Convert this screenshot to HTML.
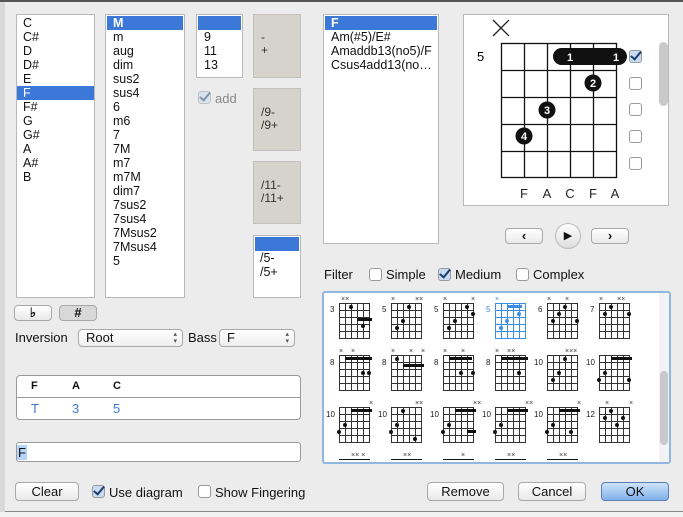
<!DOCTYPE html>
<html><head><style>
*{margin:0;padding:0;box-sizing:border-box}
body{width:683px;height:517px;background:#ececec;font-family:"Liberation Sans",sans-serif;font-size:12px;color:#111;position:relative;overflow:hidden}
.a{position:absolute}
.list{position:absolute;background:#fff;border:1px solid #b9b9b9;line-height:14px;font-size:12.5px}
.list div{padding-left:6px;height:14px}
.sel{background:#3b78d8;color:#fff}
.gb{position:absolute;background:#d6d2cc;border:1px solid #c3c0bb;color:#333;font-size:12px;line-height:13px;padding-left:7px}
.btn{position:absolute;background:linear-gradient(#fff,#e9e9e9);border:1px solid #a9a9a9;border-radius:4px;text-align:center;font-size:13px;line-height:17px;height:19px}
.cb{position:absolute;width:13px;height:13px;border:1px solid #9a9a9a;border-radius:3px;background:#fff}
.cb.on::after{content:"";position:absolute;left:3px;top:-2px;width:4px;height:9px;border:solid #1d3d6a;border-width:0 2.5px 2.5px 0;transform:rotate(40deg)}
.cb.on{background:#c7dcf3}
.sel2{position:absolute;background:linear-gradient(#fff,#eee);border:1px solid #a9a9a9;border-radius:4px;height:18px;font-size:13px;line-height:16px;padding-left:7px}
.sel2::after{content:"▴\A▾";white-space:pre;position:absolute;right:5px;top:1px;font-size:7px;line-height:7px;color:#555}
</style></head><body>
<div class="a" style="left:0;top:0;width:683px;height:2px;background:#555"></div>
<div class="a" style="left:0;top:511px;width:683px;height:1px;background:#888"></div>
<div class="a" style="left:0;top:512px;width:683px;height:5px;background:#f2f2f2"></div>
<div class="a" style="left:0;top:2px;width:5px;height:510px;background:#d8d8d8"></div>

<div class="list" style="left:16px;top:14px;width:79px;height:284px;padding-top:1px">
<div>C</div><div>C#</div><div>D</div><div>D#</div><div>E</div><div class="sel">F</div><div>F#</div><div>G</div><div>G#</div><div>A</div><div>A#</div><div>B</div></div>
<div class="list" style="left:105px;top:14px;width:80px;height:284px;padding:1px 1px 0">
<div class="sel" style="font-weight:bold">M</div><div>m</div><div>aug</div><div>dim</div><div>sus2</div><div>sus4</div><div>6</div><div>m6</div><div>7</div><div>7M</div><div>m7</div><div>m7M</div><div>dim7</div><div>7sus2</div><div>7sus4</div><div>7Msus2</div><div>7Msus4</div><div>5</div></div>
<div class="list" style="left:196px;top:14px;width:47px;height:64px;padding:1px 1px 0">
<div class="sel"></div><div>9</div><div>11</div><div>13</div></div>
<div class="cb on" style="left:198px;top:91px;opacity:.5"></div>
<div class="a" style="left:215px;top:91px;font-size:13px;color:#888">add</div>
<div class="gb" style="left:253px;top:14px;width:48px;height:64px;padding-top:16px">-<br>+</div>
<div class="gb" style="left:253px;top:88px;width:48px;height:63px;padding-top:17px">/9-<br>/9+</div>
<div class="gb" style="left:253px;top:161px;width:48px;height:63px;padding-top:17px">/11-<br>/11+</div>
<div class="list" style="left:253px;top:235px;width:48px;height:63px;padding:1px 1px 0">
<div class="sel"></div><div style="padding-left:5px">/5-</div><div style="padding-left:5px">/5+</div></div>
<div class="list" style="left:323px;top:14px;width:116px;height:230px;padding:1px 1px 0">
<div class="sel" style="font-weight:bold">F</div><div>Am(#5)/E#</div><div>Amaddb13(no5)/F</div><div>Csus4add13(no…</div></div>

<div class="a" style="left:463px;top:14px;width:206px;height:192px;background:#fff;border:1px solid #b9b9b9"></div>
<div class="a" style="left:659px;top:42px;width:9px;height:64px;background:#c9c9c9;border-radius:5px"></div>
<svg class="a" style="left:463px;top:14px" width="195" height="192">
<path d="M30 6 L46 22 M46 6 L30 22" stroke="#222" stroke-width="1.3"/>
<text x="14" y="47" font-family="Liberation Sans" font-size="13">5</text>
<g stroke="#111" stroke-width="1.3" fill="none">
<rect x="38.5" y="29.5" width="115" height="134"/>
<path d="M61.5 29.5V163.5M84.5 29.5V163.5M107.5 29.5V163.5M130.5 29.5V163.5M38.5 56.5H153.5M38.5 83.5H153.5M38.5 110.5H153.5M38.5 137.5H153.5"/>
</g>
<rect x="90" y="34" width="74" height="17" rx="8.5" fill="#111"/>
<circle cx="130" cy="69" r="8.5" fill="#111"/><circle cx="84" cy="96" r="8.5" fill="#111"/><circle cx="61" cy="122" r="8.5" fill="#111"/>
<g fill="#fff" font-family="Liberation Sans" font-weight="bold" font-size="11" text-anchor="middle">
<text x="107" y="47">1</text><text x="153" y="47">1</text><text x="130" y="73">2</text><text x="84" y="100">3</text><text x="61" y="126">4</text></g>
<g font-family="Liberation Sans" font-size="13" text-anchor="middle" fill="#222">
<text x="61" y="184">F</text><text x="84" y="184">A</text><text x="107" y="184">C</text><text x="130" y="184">F</text><text x="152" y="184">A</text></g>
</svg>
<div class="cb on" style="left:629px;top:50px"></div>
<div class="cb" style="left:629px;top:77px"></div>
<div class="cb" style="left:629px;top:103px"></div>
<div class="cb" style="left:629px;top:130px"></div>
<div class="cb" style="left:629px;top:157px"></div>

<div class="btn" style="left:505px;top:228px;width:38px;height:16px;line-height:14px;font-weight:bold">‹</div>
<div class="a" style="left:555px;top:223px;width:26px;height:26px;border-radius:50%;background:linear-gradient(#fff,#ddd);border:1px solid #bbb;text-align:center;line-height:24px;font-size:11px">▶</div>
<div class="btn" style="left:591px;top:228px;width:38px;height:16px;line-height:14px;font-weight:bold">›</div>

<div class="a" style="left:324px;top:267px;font-size:13px">Filter</div>
<div class="cb" style="left:369px;top:268px"></div><div class="a" style="left:386px;top:267px;font-size:13px">Simple</div>
<div class="cb on" style="left:438px;top:268px"></div><div class="a" style="left:455px;top:267px;font-size:13px">Medium</div>
<div class="cb" style="left:516px;top:268px"></div><div class="a" style="left:533px;top:267px;font-size:13px">Complex</div>

<div class="a" style="left:322px;top:291px;width:349px;height:173px;background:#fff;border:2px solid #8fb7df;border-radius:3px;overflow:hidden">
<svg width="345" height="169" style="position:absolute;left:0;top:0">
<defs><g id="g" fill="none" stroke="#333" stroke-width="1"><rect x=".5" y=".5" width="30" height="35"/><path d="M6.5 .5V35.5M12.5 .5V35.5M18.5 .5V35.5M24.5 .5V35.5M.5 7.5H30.5M.5 14.5H30.5M.5 21.5H30.5M.5 28.5H30.5"/></g></defs>
<g font-family="Liberation Sans" font-size="8" fill="#222">
<use href="#g" x="15" y="10"/><use href="#g" x="67" y="10"/><use href="#g" x="119" y="10"/><use href="#g" x="223" y="10"/><use href="#g" x="275" y="10"/>
<g transform="translate(171,10)" fill="none" stroke="#3a8ee6"><rect x=".5" y=".5" width="30" height="35"/><path d="M6.5 .5V35.5M12.5 .5V35.5M18.5 .5V35.5M24.5 .5V35.5M.5 7.5H30.5M.5 14.5H30.5M.5 21.5H30.5M.5 28.5H30.5"/></g>
<use href="#g" x="15" y="62"/><use href="#g" x="67" y="62"/><use href="#g" x="119" y="62"/><use href="#g" x="171" y="62"/><use href="#g" x="223" y="62"/><use href="#g" x="275" y="62"/>
<use href="#g" x="15" y="114"/><use href="#g" x="67" y="114"/><use href="#g" x="119" y="114"/><use href="#g" x="171" y="114"/><use href="#g" x="223" y="114"/><use href="#g" x="275" y="114"/>
<text x="6" y="19">3</text><text x="58" y="19">5</text><text x="110" y="19">5</text><text x="162" y="19" fill="#3a8ee6">5</text><text x="214" y="19">6</text><text x="266" y="19">7</text>
<text x="6" y="72">8</text><text x="58" y="72">8</text><text x="110" y="72">8</text><text x="162" y="72">8</text><text x="210" y="72">10</text><text x="262" y="72">10</text>
<text x="2" y="124">10</text><text x="54" y="124">10</text><text x="106" y="124">10</text><text x="158" y="124">10</text><text x="210" y="124">10</text><text x="262" y="124">12</text>
</g>
<g fill="#111">
<circle cx="27" cy="14" r="2"/><rect x="33" y="25" width="15" height="3"/><circle cx="39" cy="33" r="2"/>
<circle cx="85" cy="14" r="2"/><circle cx="79" cy="28" r="2"/><circle cx="73" cy="35" r="2"/>
<circle cx="143" cy="14" r="2"/><circle cx="149" cy="21" r="2"/><circle cx="131" cy="28" r="2"/><circle cx="125" cy="35" r="2"/>
<circle cx="241" cy="14" r="2"/><circle cx="235" cy="21" r="2"/><circle cx="229" cy="28" r="2"/><circle cx="253" cy="28" r="2"/>
<circle cx="287" cy="14" r="2"/><circle cx="281" cy="21" r="2"/><circle cx="305" cy="21" r="2"/>
<rect x="21" y="64" width="27" height="3"/><circle cx="39" cy="80" r="2"/><circle cx="45" cy="80" r="2"/>
<circle cx="73" cy="66" r="2"/><rect x="79" y="71" width="21" height="3"/>
<rect x="125" y="64" width="23" height="3"/><circle cx="137" cy="80" r="2"/><circle cx="149" cy="80" r="2"/>
<rect x="177" y="64" width="27" height="3"/><circle cx="195" cy="80" r="2"/>
<circle cx="241" cy="66" r="2"/><circle cx="235" cy="80" r="2"/><circle cx="229" cy="87" r="2"/>
<rect x="287" y="64" width="21" height="3"/><circle cx="281" cy="80" r="2"/><circle cx="275" cy="87" r="2"/><circle cx="305" cy="87" r="2"/>
<rect x="27" y="116" width="21" height="3"/><circle cx="21" cy="132" r="2"/><circle cx="15" cy="139" r="2"/>
<circle cx="79" cy="118" r="2"/><circle cx="73" cy="132" r="2"/><circle cx="67" cy="139" r="2"/><circle cx="91" cy="146" r="2"/>
<rect x="131" y="116" width="21" height="3"/><circle cx="125" cy="132" r="2"/><circle cx="119" cy="139" r="2"/><rect x="143" y="137" width="9" height="3"/>
<rect x="183" y="116" width="21" height="3"/><circle cx="177" cy="132" r="2"/><circle cx="171" cy="139" r="2"/>
<rect x="235" y="116" width="21" height="3"/><circle cx="229" cy="132" r="2"/><circle cx="223" cy="139" r="2"/><circle cx="247" cy="139" r="2"/>
<circle cx="287" cy="118" r="2"/><circle cx="281" cy="125" r="2"/><circle cx="299" cy="125" r="2"/><circle cx="293" cy="132" r="2"/>
<rect x="15" y="166" width="31" height="1"/><rect x="67" y="166" width="31" height="1"/><rect x="119" y="166" width="31" height="1"/><rect x="171" y="166" width="31" height="1"/><rect x="223" y="166" width="31" height="1"/>
</g>
<g fill="#3a8ee6"><rect x="183" y="12" width="15" height="3"/><circle cx="195" cy="21" r="2"/><circle cx="183" cy="28" r="2"/><circle cx="177" cy="35" r="2"/></g>
<g font-family="Liberation Sans" font-size="7" fill="#333">
<text x="17" y="8">××</text><text x="67" y="8">×</text><text x="91" y="8">××</text><text x="119" y="8">×</text><text x="147" y="8">×</text><text x="171" y="8" fill="#3a8ee6">×</text><text x="223" y="8">×</text><text x="241" y="8">×</text><text x="275" y="8">×</text><text x="293" y="8">××</text>
<text x="15" y="60">×</text><text x="27" y="60">×</text><text x="67" y="60">×</text><text x="85" y="60">×</text><text x="97" y="60">×</text><text x="119" y="60">×</text><text x="137" y="60">×</text><text x="171" y="60">×</text><text x="183" y="60">××</text><text x="241" y="60">×××</text>
<text x="45" y="112">×</text><text x="91" y="112">××</text><text x="149" y="112">××</text><text x="201" y="112">××</text><text x="253" y="112">×</text><text x="281" y="112">×</text><text x="305" y="112">×</text>
<text x="27" y="164">×× ×</text><text x="79" y="164">××</text><text x="137" y="164">×</text><text x="183" y="164">××</text><text x="235" y="164">××</text>
</g>
</svg>
<div class="a" style="left:335px;top:0;width:10px;height:169px;background:#f2f2f2"></div>
<div class="a" style="left:336px;top:78px;width:8px;height:74px;background:#c9c9c9;border-radius:4px"></div>
</div>

<div class="btn" style="left:14px;top:305px;width:38px;height:16px;line-height:14px;font-weight:bold">♭</div>
<div class="btn" style="left:59px;top:305px;width:38px;height:16px;line-height:14px;background:#d8d8d8;font-weight:bold">#</div>
<div class="a" style="left:15px;top:330px;font-size:13px">Inversion</div>
<div class="sel2" style="left:78px;top:329px;width:105px">Root</div>
<div class="a" style="left:188px;top:330px;font-size:13px">Bass</div>
<div class="sel2" style="left:219px;top:329px;width:76px">F</div>

<div class="a" style="left:16px;top:375px;width:285px;height:45px;background:#fff;border:1px solid #999;border-radius:4px"></div>
<div class="a" style="left:16px;top:397px;width:285px;height:1px;background:#999"></div>
<div class="a" style="left:31px;top:380px;font-weight:bold;font-size:11px">F</div>
<div class="a" style="left:72px;top:380px;font-weight:bold;font-size:11px">A</div>
<div class="a" style="left:113px;top:380px;font-weight:bold;font-size:11px">C</div>
<div class="a" style="left:31px;top:401px;font-size:13px;color:#3a7bd5">T</div>
<div class="a" style="left:72px;top:401px;font-size:13px;color:#3a7bd5">3</div>
<div class="a" style="left:113px;top:401px;font-size:13px;color:#3a7bd5">5</div>

<div class="a" style="left:16px;top:442px;width:285px;height:20px;background:#fff;border:1px solid #999;border-radius:3px"></div>
<div class="a" style="left:17px;top:445px;font-size:13px;background:#b6d4f5;padding:0 1px">F</div>

<div class="btn" style="left:15px;top:482px;width:64px">Clear</div>
<div class="cb on" style="left:92px;top:485px"></div><div class="a" style="left:109px;top:485px;font-size:13px">Use diagram</div>
<div class="cb" style="left:198px;top:485px"></div><div class="a" style="left:215px;top:485px;font-size:13px">Show Fingering</div>
<div class="btn" style="left:427px;top:482px;width:77px">Remove</div>
<div class="btn" style="left:518px;top:482px;width:68px">Cancel</div>
<div class="btn" style="left:601px;top:482px;width:68px;background:linear-gradient(#cfe3fb,#7fb1ea);border-color:#5a7fb5">OK</div>
</body></html>
